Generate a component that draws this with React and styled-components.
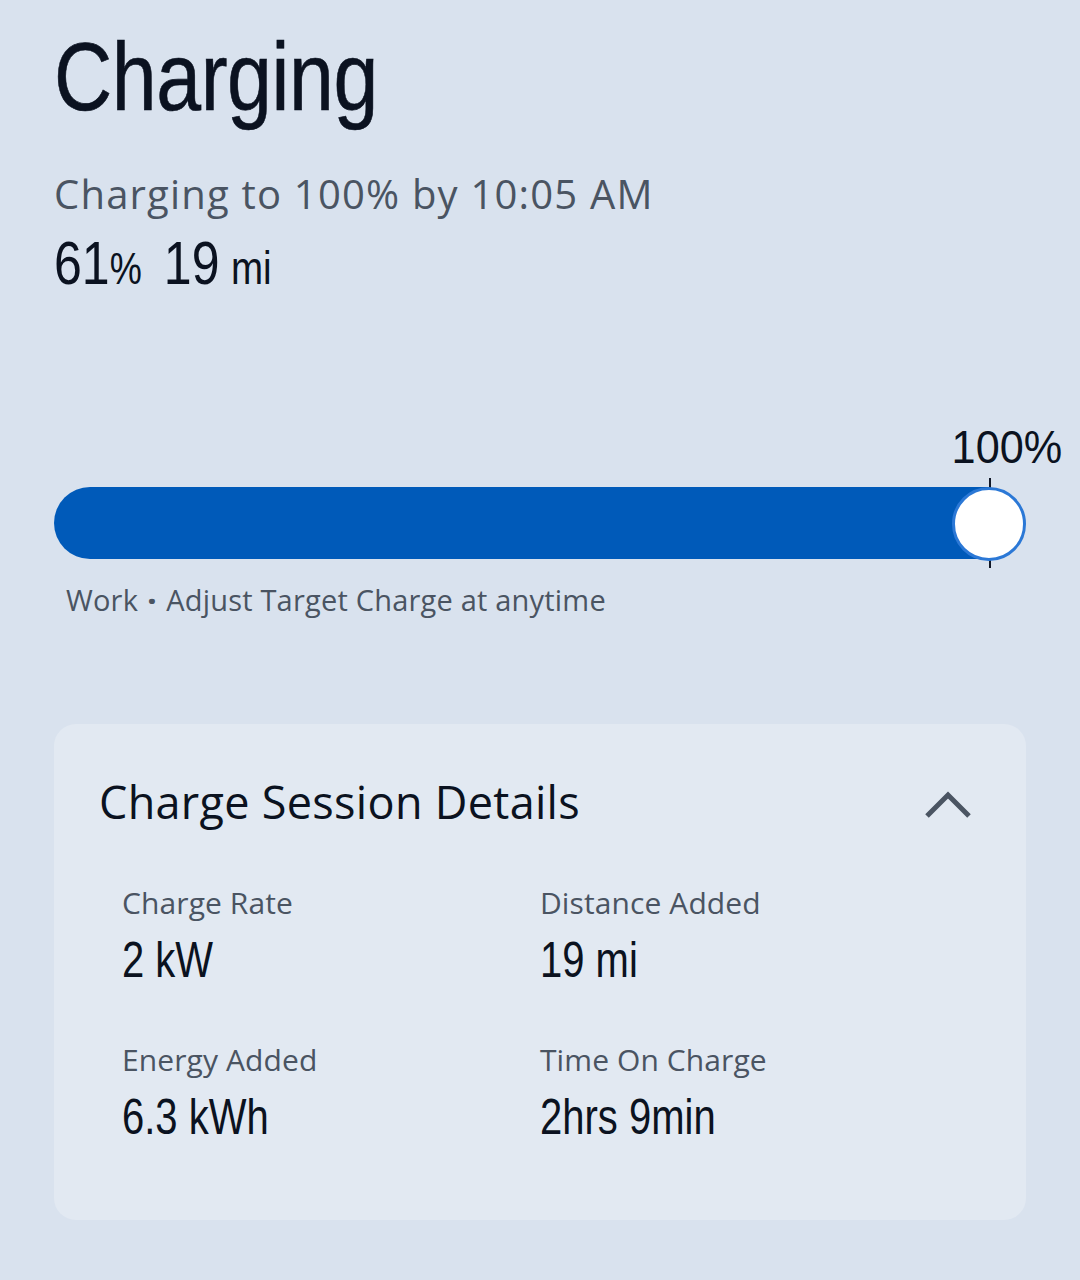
import React from "react";
import styled, { createGlobalStyle } from "styled-components";

const GlobalStyle = createGlobalStyle`
  html, body {
    margin: 0;
    padding: 0;
    background: #d9e2ee;
  }
  body {
    font-family: "Liberation Sans", Arial, sans-serif;
    color: #0b1220;
  }
`;

// the app font is a condensed sans; squeeze Liberation Sans to get close
const condensed = `
  font-family: "Liberation Sans", Arial, sans-serif;
  display: inline-block;
  transform-origin: left center;
`;

const Page = styled.div`
  width: 1080px;
  min-height: 1280px;
  box-sizing: border-box;
  padding: 22px 54px 0 54px;
  background: #d9e2ee;
`;

const Title = styled.h1`
  ${condensed}
  margin: 0;
  font-weight: 400;
  font-size: 96px;
  line-height: 110px;
  letter-spacing: -0.5px;
  transform: scaleX(0.84);
  color: #0b1220;
  -webkit-text-stroke: 0.6px #0b1220;
`;

const Subtitle = styled.div`
  margin-top: 40px;
  font-family: "Open Sans", sans-serif;
  font-size: 40px;
  line-height: 44px;
  color: #4a5462;
  letter-spacing: 1.2px;
`;

const Stats = styled.div`
  ${condensed}
  display: flex;
  align-items: baseline;
  gap: 27px;
  margin-top: 14px;
  transform: scaleX(0.82);
  color: #0b1220;
`;

const Stat = styled.span`
  font-size: 61px;
  line-height: 66px;
  small {
    font-size: ${(p) => p.$unitSize || "44px"};
    margin-left: ${(p) => p.$unitGap || "0"};
  }
`;

const SliderBlock = styled.div`
  margin-top: 120px;
  width: 1008px;
`;

const TargetLabel = styled.div`
  display: flex;
  justify-content: flex-end;
  span {
    ${condensed}
    transform-origin: right center;
    transform: scaleX(0.92);
    font-size: 47px;
    line-height: 50px;
    color: #0b1220;
  }
`;

const Track = styled.div`
  display: flex;
  align-items: center;
  width: 972px;
  height: 90px;
  margin-top: 6px;
  position: relative;
`;

const Fill = styled.div`
  flex: 1;
  height: 72px;
  margin-right: 36px;
  background: #005ab9;
  border-radius: 36px 0 0 36px;
`;

const Tick = styled.div`
  position: absolute;
  right: 35px;
  top: 0;
  width: 2px;
  height: 90px;
  background: #111827;
`;

const Knob = styled.div`
  position: absolute;
  right: 0;
  top: 9px;
  width: 68px;
  height: 68px;
  border-radius: 50%;
  background: #ffffff;
  border: 3px solid #2b78d6;
`;

const Hint = styled.div`
  margin-top: 14px;
  padding-left: 12px;
  font-family: "Open Sans", sans-serif;
  font-size: 29px;
  line-height: 36px;
  letter-spacing: 0.2px;
  color: #4a5462;
  b {
    font-weight: 800;
    margin: 0 2px;
  }
`;

const Card = styled.section`
  margin-top: 106px;
  width: 972px;
  box-sizing: border-box;
  padding: 50px 54px 74px 45px;
  background: #e2e9f2;
  border-radius: 22px;
`;

const CardHeader = styled.div`
  display: flex;
  align-items: center;
  justify-content: space-between;
  svg {
    margin-top: 6px;
  }
`;

const CardTitle = styled.h2`
  margin: 0;
  font-family: "Open Sans", sans-serif;
  font-weight: 400;
  font-size: 45px;
  line-height: 56px;
  letter-spacing: 0.3px;
  color: #0b1220;
`;

const DetailsGrid = styled.div`
  display: grid;
  grid-template-columns: 418px 1fr;
  row-gap: 53px;
  margin-top: 55px;
  padding-left: 23px;
`;

const Detail = styled.div`
  display: flex;
  flex-direction: column;
  align-items: flex-start;
`;

const Label = styled.div`
  font-family: "Open Sans", sans-serif;
  font-size: 30px;
  line-height: 36px;
  color: #4a5462;
  letter-spacing: 0.1px;
`;

const Value = styled.div`
  ${condensed}
  margin-top: 10px;
  font-size: 50px;
  line-height: 58px;
  transform: scaleX(0.8);
  color: #0b1220;
`;

const Chevron = () => (
  <svg width="48" height="30" viewBox="0 0 48 30" fill="none">
    <path d="M3 26 L24 5 L45 26" stroke="#4b5563" strokeWidth="5" />
  </svg>
);

const details = [
  { label: "Charge Rate", value: "2 kW" },
  { label: "Distance Added", value: "19 mi" },
  { label: "Energy Added", value: "6.3 kWh" },
  { label: "Time On Charge", value: "2hrs 9min" },
];

const App = () => {
  return (
    <>
      <GlobalStyle />
      <Page>
        <Title>Charging</Title>
        <Subtitle>Charging to 100% by 10:05 AM</Subtitle>
        <Stats>
          <Stat>61<small>%</small></Stat>
          <Stat $unitGap="14px" $unitSize="47px">19<small>mi</small></Stat>
        </Stats>

        <SliderBlock>
          <TargetLabel><span>100%</span></TargetLabel>
          <Track>
            <Fill />
            <Tick />
            <Knob />
          </Track>
          <Hint>Work <b>·</b> Adjust Target Charge at anytime</Hint>
        </SliderBlock>

        <Card>
          <CardHeader>
            <CardTitle>Charge Session Details</CardTitle>
            <Chevron />
          </CardHeader>
          <DetailsGrid>
            {details.map((d) => (
              <Detail key={d.label}>
                <Label>{d.label}</Label>
                <Value>{d.value}</Value>
              </Detail>
            ))}
          </DetailsGrid>
        </Card>
      </Page>
    </>
  );
};

export default App;
